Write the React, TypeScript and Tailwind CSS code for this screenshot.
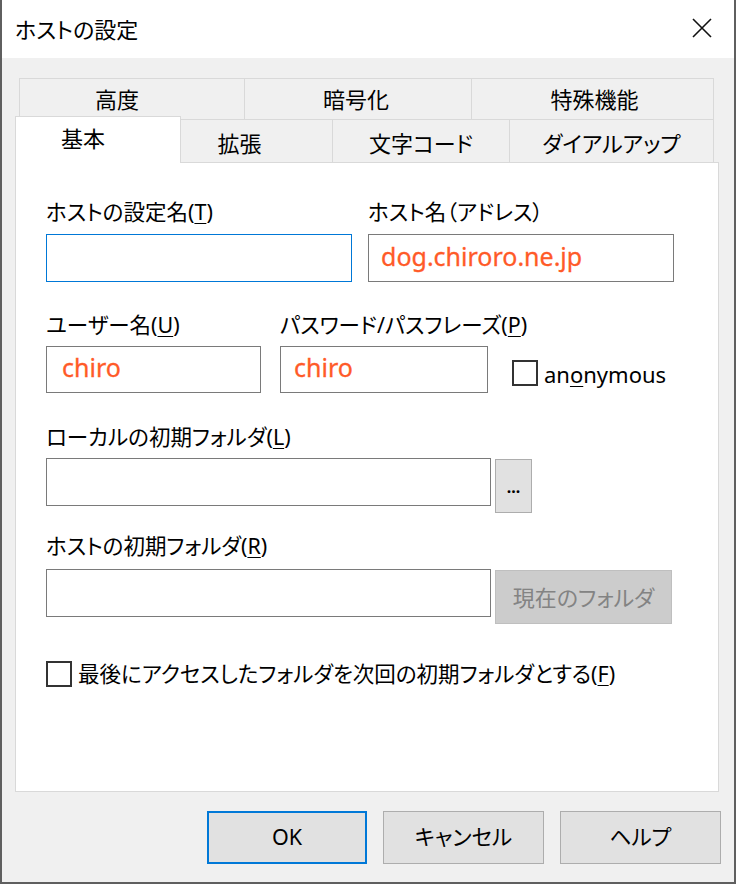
import React from 'react';

const jp = '"Noto Sans", "Noto Sans CJK JP", sans-serif';

const U = ({ children }: { children: React.ReactNode }) => (
  <span className="underline underline-offset-[3px] decoration-1">{children}</span>
);

const Field = ({ w, value, focused }: { w: string; value?: string; focused?: boolean }) => (
  <div
    className={`${w} h-[48px] bg-white border flex items-center pl-[12px] ${
      focused ? 'border-[#0078d7]' : 'border-[#7a7a7a]'
    }`}
  >
    {value && <span className="text-[25px] text-[#ff5a28] leading-none mb-[4px] [-webkit-text-stroke:0.3px_#ff5a28]">{value}</span>}
  </div>
);

const CheckBox = () => <div className="w-[26px] h-[26px] border-2 border-[#333333] bg-white shrink-0" />;

const App = () => {
  const backTabs = [
    { label: '高度', w: 'w-[226px]', pad: 'pr-[30px]' },
    { label: '暗号化', w: 'w-[227px]', pad: 'pr-[4px]' },
    { label: '特殊機能', w: 'w-[242px]', pad: 'pl-[4px]' },
  ];
  const frontTabs = [
    { label: '拡張', w: 'w-[152px]', pad: 'pr-[34px]' },
    { label: '文字コード', w: 'w-[177px]', pad: '' },
    { label: 'ダイアルアップ', w: 'w-[204px]', pad: '' },
  ];

  return (
    <div
      className="w-[736px] h-[884px] flex flex-col bg-[#f0f0f0] border-x-2 border-b-2 border-[#5f5f5f] text-black [font-feature-settings:'palt'] overflow-hidden"
      style={{ fontFamily: jp }}
    >
      {/* title bar */}
      <div className="h-[58px] shrink-0 bg-white flex items-center justify-between pl-[13px] pr-[22px]">
        <span className="text-[22px] leading-none">ホストの設定</span>
        <svg width="20" height="20" viewBox="0 0 20 20" className="mt-[-2px]">
          <path d="M1 1 L19 19 M19 1 L1 19" stroke="#111" strokeWidth="1.6" fill="none" />
        </svg>
      </div>

      <div className="flex-1 pl-[13px] pt-[20px]">
        {/* back row of tabs */}
        <div className="flex ml-[4px] h-[42px]">
          {backTabs.map((t, i) => (
            <div
              key={t.label}
              className={`${t.w} ${t.pad} h-full flex items-center justify-center text-[22px] border-t border-r border-[#d9d9d9] ${
                i === 0 ? 'border-l' : ''
              }`}
            >
              {t.label}
            </div>
          ))}
        </div>

        {/* front row of tabs */}
        <div className="flex items-end mt-[-4px]">
          <div className="w-[166px] h-[47px] bg-white border border-b-0 border-[#d9d9d9] relative z-10 mb-[-1px] flex items-start justify-center pr-[30px] pt-[5px] text-[22px]">
            基本
          </div>
          {frontTabs.map((t) => (
            <div
              key={t.label}
              className={`${t.w} ${t.pad} h-[43px] flex items-center justify-center text-[22px] border-t border-r border-[#d9d9d9] pt-[4px]`}
            >
              {t.label}
            </div>
          ))}
        </div>

        {/* panel */}
        <div className="w-[704px] h-[630px] bg-white border border-[#d9d9d9] pl-[30px] pt-[35px] text-[21.5px]">
          <div className="flex gap-[16px]">
            <div>
              <div className="leading-[28px] mb-[8px]">
                ホストの設定名(<U>T</U>)
              </div>
              <Field w="w-[306px]" focused />
            </div>
            <div>
              <div className="leading-[28px] mb-[8px]">ホスト名（アドレス）</div>
              <Field w="w-[306px]" value="dog.chiroro.ne.jp" />
            </div>
          </div>

          <div className="flex items-end mt-[29px]">
            <div className="w-[215px]">
              <div className="leading-[28px] mb-[7px] whitespace-nowrap">
                ユーザー名(<U>U</U>)
              </div>
              <div className="w-[215px] h-[47px] bg-white border border-[#7a7a7a] flex items-center pl-[15px]">
                <span className="text-[25px] text-[#ff5a28] leading-none mb-[4px] [-webkit-text-stroke:0.3px_#ff5a28]">chiro</span>
              </div>
            </div>
            <div className="w-[208px] ml-[19px]">
              <div className="leading-[28px] mb-[7px] whitespace-nowrap">
                パスワード/パスフレーズ(<U>P</U>)
              </div>
              <div className="w-[208px] h-[47px] bg-white border border-[#7a7a7a] flex items-center pl-[13px]">
                <span className="text-[25px] text-[#ff5a28] leading-none mb-[4px] [-webkit-text-stroke:0.3px_#ff5a28]">chiro</span>
              </div>
            </div>
            <div className="flex items-center ml-[24px] mb-[7px] gap-[6px]">
              <CheckBox />
              <span className="text-[22px] leading-none mt-[2px]">
                an<U>o</U>nymous
              </span>
            </div>
          </div>

          <div className="mt-[30px]">
            <div className="leading-[28px] mb-[7px]">
              ローカルの初期フォルダ(<U>L</U>)
            </div>
            <div className="flex items-start gap-[4px]">
              <div className="w-[445px] h-[48px] bg-white border border-[#7a7a7a]" />
              <div className="w-[37px] h-[54px] mt-[1px] bg-[#e1e1e1] border border-[#adadad] flex items-end justify-center pb-[17px] text-[16px] font-bold leading-none">
                ...
              </div>
            </div>
          </div>

          <div className="mt-[19px]">
            <div className="leading-[28px] mb-[9px]">
              ホストの初期フォルダ(<U>R</U>)
            </div>
            <div className="flex items-start gap-[4px]">
              <div className="w-[445px] h-[48px] bg-white border border-[#7a7a7a]" />
              <div className="w-[177px] h-[54px] mt-[1px] bg-[#cccccc] border border-[#bfbfbf] flex items-center justify-center text-[#838383] text-[22px]">
                現在のフォルダ
              </div>
            </div>
          </div>

          <div className="flex items-center gap-[6px] mt-[36px]">
            <CheckBox />
            <span className="leading-[28px] whitespace-nowrap">
              最後にアクセスしたフォルダを次回の初期フォルダとする(<U>F</U>)
            </span>
          </div>
        </div>

        {/* buttons */}
        <div className="flex justify-end gap-[16px] mt-[19px] pr-[13px]">
          <button className="w-[160px] h-[53px] bg-[#e1e1e1] border-2 border-[#0078d7] text-[21.5px]">OK</button>
          <button className="w-[161px] h-[53px] bg-[#e1e1e1] border border-[#adadad] text-[21.5px]">キャンセル</button>
          <button className="w-[161px] h-[53px] bg-[#e1e1e1] border border-[#adadad] text-[21.5px]">ヘルプ</button>
        </div>
      </div>
    </div>
  );
};

export default App;
